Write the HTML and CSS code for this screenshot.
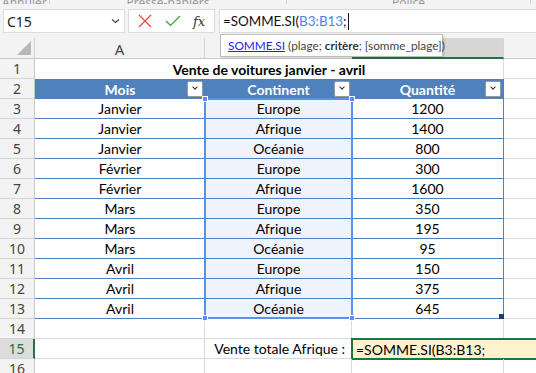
FILE: index.html
```html
<!DOCTYPE html>
<html lang="fr">
<head>
  <meta charset="UTF-8" />
  <title>Vente de voitures - Excel</title>
  <meta name="viewport" content="width=device-width, initial-scale=1.0" />
  <link rel="stylesheet" href="styles.css">
</head>
<body>

  <div class="ribbon-tail">
    <div class="grp g1"><span>Annuler</span></div>
    <div class="grp g2"><span>Presse-papiers</span></div>
    <div class="grp g3"><span>Police</span></div>
  </div>

  <div class="formula-bar">
    <div class="name-box">
      <span>C15</span>
      <svg width="9" height="6" viewBox="0 0 9 6"><path d="M1 1.5 L4.5 4.5 L8 1.5" fill="none" stroke="#444" stroke-width="1.2"/></svg>
    </div>
    <div class="fx-buttons">
      <svg width="14" height="14" viewBox="0 0 14 14"><path d="M1 1 L13 13 M13 1 L1 13" stroke="#e5473d" stroke-width="1.2" fill="none"/></svg>
      <svg width="16" height="12" viewBox="0 0 16 12"><path d="M1 6 L5.5 10.5 L15 1" stroke="#3c9f3c" stroke-width="1.2" fill="none"/></svg>
      <span class="fx">fx</span>
    </div>
    <div class="formula-input">
      <span>=SOMME.SI(</span><span class="ref">B3:B13</span><span>;</span><span class="caret"></span>
    </div>
  </div>

  <div class="sheet-view">
  <div class="sheet">
    <!-- column headers -->
    <div class="corner"><span class="tri"></span></div>
    <div class="col-head">A</div>
    <div class="col-head">B</div>
    <div class="col-head active">C</div>
    <div class="col-head">D</div>

    <!-- row 1 -->
    <div class="row-head">1</div>
    <div class="cell title">Vente de voitures janvier - avril</div>
    <div class="cell"></div>

    <!-- row 2 -->
    <div class="row-head">2</div>
    <div class="cell th">Mois<span class="filter"></span></div>
    <div class="cell th">Continent<span class="filter"></span></div>
    <div class="cell th last">Quantité<span class="filter"></span></div>
    <div class="cell"></div>

    <div class="row-head">3</div>
    <div class="cell td">Janvier</div><div class="cell td sel">Europe</div><div class="cell td last">1200</div><div class="cell"></div>
    <div class="row-head">4</div>
    <div class="cell td">Janvier</div><div class="cell td sel">Afrique</div><div class="cell td last">1400</div><div class="cell"></div>
    <div class="row-head">5</div>
    <div class="cell td">Janvier</div><div class="cell td sel">Océanie</div><div class="cell td last">800</div><div class="cell"></div>
    <div class="row-head">6</div>
    <div class="cell td">Février</div><div class="cell td sel">Europe</div><div class="cell td last">300</div><div class="cell"></div>
    <div class="row-head">7</div>
    <div class="cell td">Février</div><div class="cell td sel">Afrique</div><div class="cell td last">1600</div><div class="cell"></div>
    <div class="row-head">8</div>
    <div class="cell td">Mars</div><div class="cell td sel">Europe</div><div class="cell td last">350</div><div class="cell"></div>
    <div class="row-head">9</div>
    <div class="cell td">Mars</div><div class="cell td sel">Afrique</div><div class="cell td last">195</div><div class="cell"></div>
    <div class="row-head">10</div>
    <div class="cell td">Mars</div><div class="cell td sel">Océanie</div><div class="cell td last">95</div><div class="cell"></div>
    <div class="row-head">11</div>
    <div class="cell td">Avril</div><div class="cell td sel">Europe</div><div class="cell td last">150</div><div class="cell"></div>
    <div class="row-head">12</div>
    <div class="cell td">Avril</div><div class="cell td sel">Afrique</div><div class="cell td last">375</div><div class="cell"></div>
    <div class="row-head">13</div>
    <div class="cell td">Avril</div><div class="cell td sel">Océanie</div><div class="cell td last">645</div><div class="cell"></div>

    <div class="row-head">14</div>
    <div class="cell"></div><div class="cell"></div><div class="cell"></div><div class="cell"></div>

    <div class="row-head active">15</div>
    <div class="cell"></div>
    <div class="cell label">Vente totale Afrique :</div>
    <div class="cell editing">=SOMME.SI(B3:B13;</div>

    <div class="row-head">16</div>
    <div class="cell"></div><div class="cell"></div><div class="cell"></div><div class="cell"></div>

    <!-- overlays -->
    <div class="range-box">
      <span class="h tl"></span><span class="h tr"></span><span class="h bl"></span><span class="h br"></span>
    </div>
    <span class="resize-handle"></span>
  </div>
  </div>

  <div class="tooltip">
    <a class="fn">SOMME.SI</a> (plage; <b>critère</b>; [somme_plage])
  </div>

</body>
</html>
```

FILE: styles.css
```css
* {
  box-sizing: border-box;
  margin: 0;
  padding: 0;
}

body {
  width: 536px;
  height: 373px;
  overflow: hidden;
  background: #f3f3f3;
  font-family: 'Noto Sans', 'Open Sans', sans-serif;
  color: #222;
  position: relative;
}

/* bottom edge of the ribbon, mostly scrolled away */
.ribbon-tail {
  display: flex;
  height: 4px;
  overflow: hidden;
}

.grp {
  display: flex;
  align-items: flex-end;
  justify-content: center;
  border-right: 1px solid #d6d6d6;
  font-size: 12px;
  line-height: 14px;
  color: #9a9a9a;
}

.grp span {
  margin-bottom: -6px;
}

.g1 { width: 50px; justify-content: flex-start; padding-left: 2px; }
.g2 { width: 237px; }
.g3 { width: 244px; }

/* formula bar */
.formula-bar {
  display: flex;
  gap: 3px;
  margin-top: 5px;
  height: 24px;
  padding-left: 3px;
}

.name-box {
  width: 122px;
  background: #fff;
  border: 1px solid #dcdcdc;
  display: flex;
  align-items: center;
  justify-content: space-between;
  padding: 0 4px 0 3px;
  font-size: 14px;
}

.fx-buttons {
  width: 87px;
  background: #fff;
  border: 1px solid #dcdcdc;
  display: flex;
  align-items: center;
  padding-left: 9px;
  gap: 13px;
}

.fx {
  font-family: 'DejaVu Serif', 'Liberation Serif', serif;
  font-style: italic;
  font-size: 13px;
  color: #333;
  margin-left: -1px;
}

.formula-input {
  flex: 1;
  margin-left: 1px;
  background: #fff;
  border: 1px solid #dcdcdc;
  border-right: none;
  display: flex;
  align-items: center;
  padding-left: 3px;
  font-family: 'Lato', sans-serif;
  font-size: 13.4px;
  color: #111;
}

.formula-input .ref {
  color: #4a86e8;
}

.caret {
  width: 1px;
  height: 17px;
  background: #111;
  margin-left: 1px;
}

/* sheet grid, wider than the window: the view clips it */
.sheet-view {
  margin-top: 5px;
  width: 536px;
  overflow: hidden;
}

.sheet {
  position: relative;
  display: grid;
  grid-template-columns: 35px 170px 147px 152px 136px;
  grid-template-rows: 21px repeat(16, 20px);
  width: 640px;
  background: #fff;
}

.corner,
.col-head,
.row-head {
  background: #f3f3f3;
  color: #444;
  border-right: 1px solid #d4d4d4;
  border-bottom: 1px solid #c8c8c8;
  display: flex;
  align-items: center;
  justify-content: center;
}

.corner {
  position: relative;
}

.tri {
  position: absolute;
  right: 3px;
  bottom: 3px;
  width: 0;
  height: 0;
  border-left: 14px solid transparent;
  border-bottom: 14px solid #b8b8b8;
}

.col-head {
  font-size: 15px;
  padding-top: 1px;
}

.col-head.active {
  background: #d6d6d6;
  border-bottom: 2px solid #217346;
}

.row-head {
  font-size: 14px;
  border-bottom-color: #d4d4d4;
  border-right-color: #c8c8c8;
}

.row-head.active {
  background: #dcdcdc;
  color: #217346;
  border-right: 2px solid #217346;
}

.cell {
  font-family: 'Lato', sans-serif;
  font-size: 14px;
  color: #000;
  border-right: 1px solid #dadada;
  border-bottom: 1px solid #dadada;
  display: flex;
  align-items: center;
  justify-content: center;
  white-space: nowrap;
}

.title {
  grid-column: span 3;
  font-weight: bold;
  border-bottom: none;
}

.th {
  position: relative;
  background: #4f81bd;
  color: #fff;
  font-weight: bold;
  border-right: none;
  border-bottom: none;
}

.th.last {
  border-right: 1px solid #4f81bd;
}

.filter {
  position: absolute;
  right: 2px;
  top: 2px;
  width: 16px;
  height: 16px;
  background: #fff;
  border: 1px solid #9a9a9a;
  border-radius: 2px;
}

.filter::after {
  content: "";
  position: absolute;
  left: 5px;
  top: 3px;
  width: 3px;
  height: 3px;
  border-right: 1.5px solid #333;
  border-bottom: 1.5px solid #333;
  transform: rotate(45deg);
}

.td {
  border-right: none;
  border-bottom: 1px solid #4f81bd;
}

.td.sel {
  background: #eef3fd;
}

.td.last {
  border-right: 1px solid #4f81bd;
}

.label {
  justify-content: flex-end;
  padding-right: 6px;
}

.editing {
  grid-column: span 2;
  justify-content: flex-start;
  padding-left: 3px;
  background: #fff2cc;
  border: 2px solid #217346;
  margin: -1px 0 -1px -1px;
}

/* reference highlight for B3:B13 */
.range-box {
  position: absolute;
  left: 204px;
  top: 60px;
  width: 149px;
  height: 221px;
  border: 2px solid #5b8ff0;
  pointer-events: none;
}

.h {
  position: absolute;
  width: 6px;
  height: 6px;
  background: #5b8ff0;
  border: 1px solid #fff;
}

.tl { left: -4px; top: -4px; }
.tr { right: -4px; top: -4px; }
.bl { left: -4px; bottom: -4px; }
.br { right: -4px; bottom: -4px; }

.resize-handle {
  position: absolute;
  left: 499px;
  top: 276px;
  width: 5px;
  height: 5px;
  background: #1f3d66;
}

/* function argument tooltip */
.tooltip {
  position: absolute;
  left: 220px;
  top: 34px;
  width: 223px;
  height: 23px;
  background: #fff;
  border: 1px solid #bdbdbd;
  box-shadow: 1px 1px 2px rgba(0, 0, 0, 0.15);
  font-family: 'Lato', sans-serif;
  font-size: 11.8px;
  line-height: 21px;
  padding-left: 7px;
  color: #444;
  white-space: nowrap;
}

.tooltip .fn {
  color: #2323e6;
  text-decoration: underline;
}

.tooltip b {
  color: #222;
  font-weight: 600;
}
```
